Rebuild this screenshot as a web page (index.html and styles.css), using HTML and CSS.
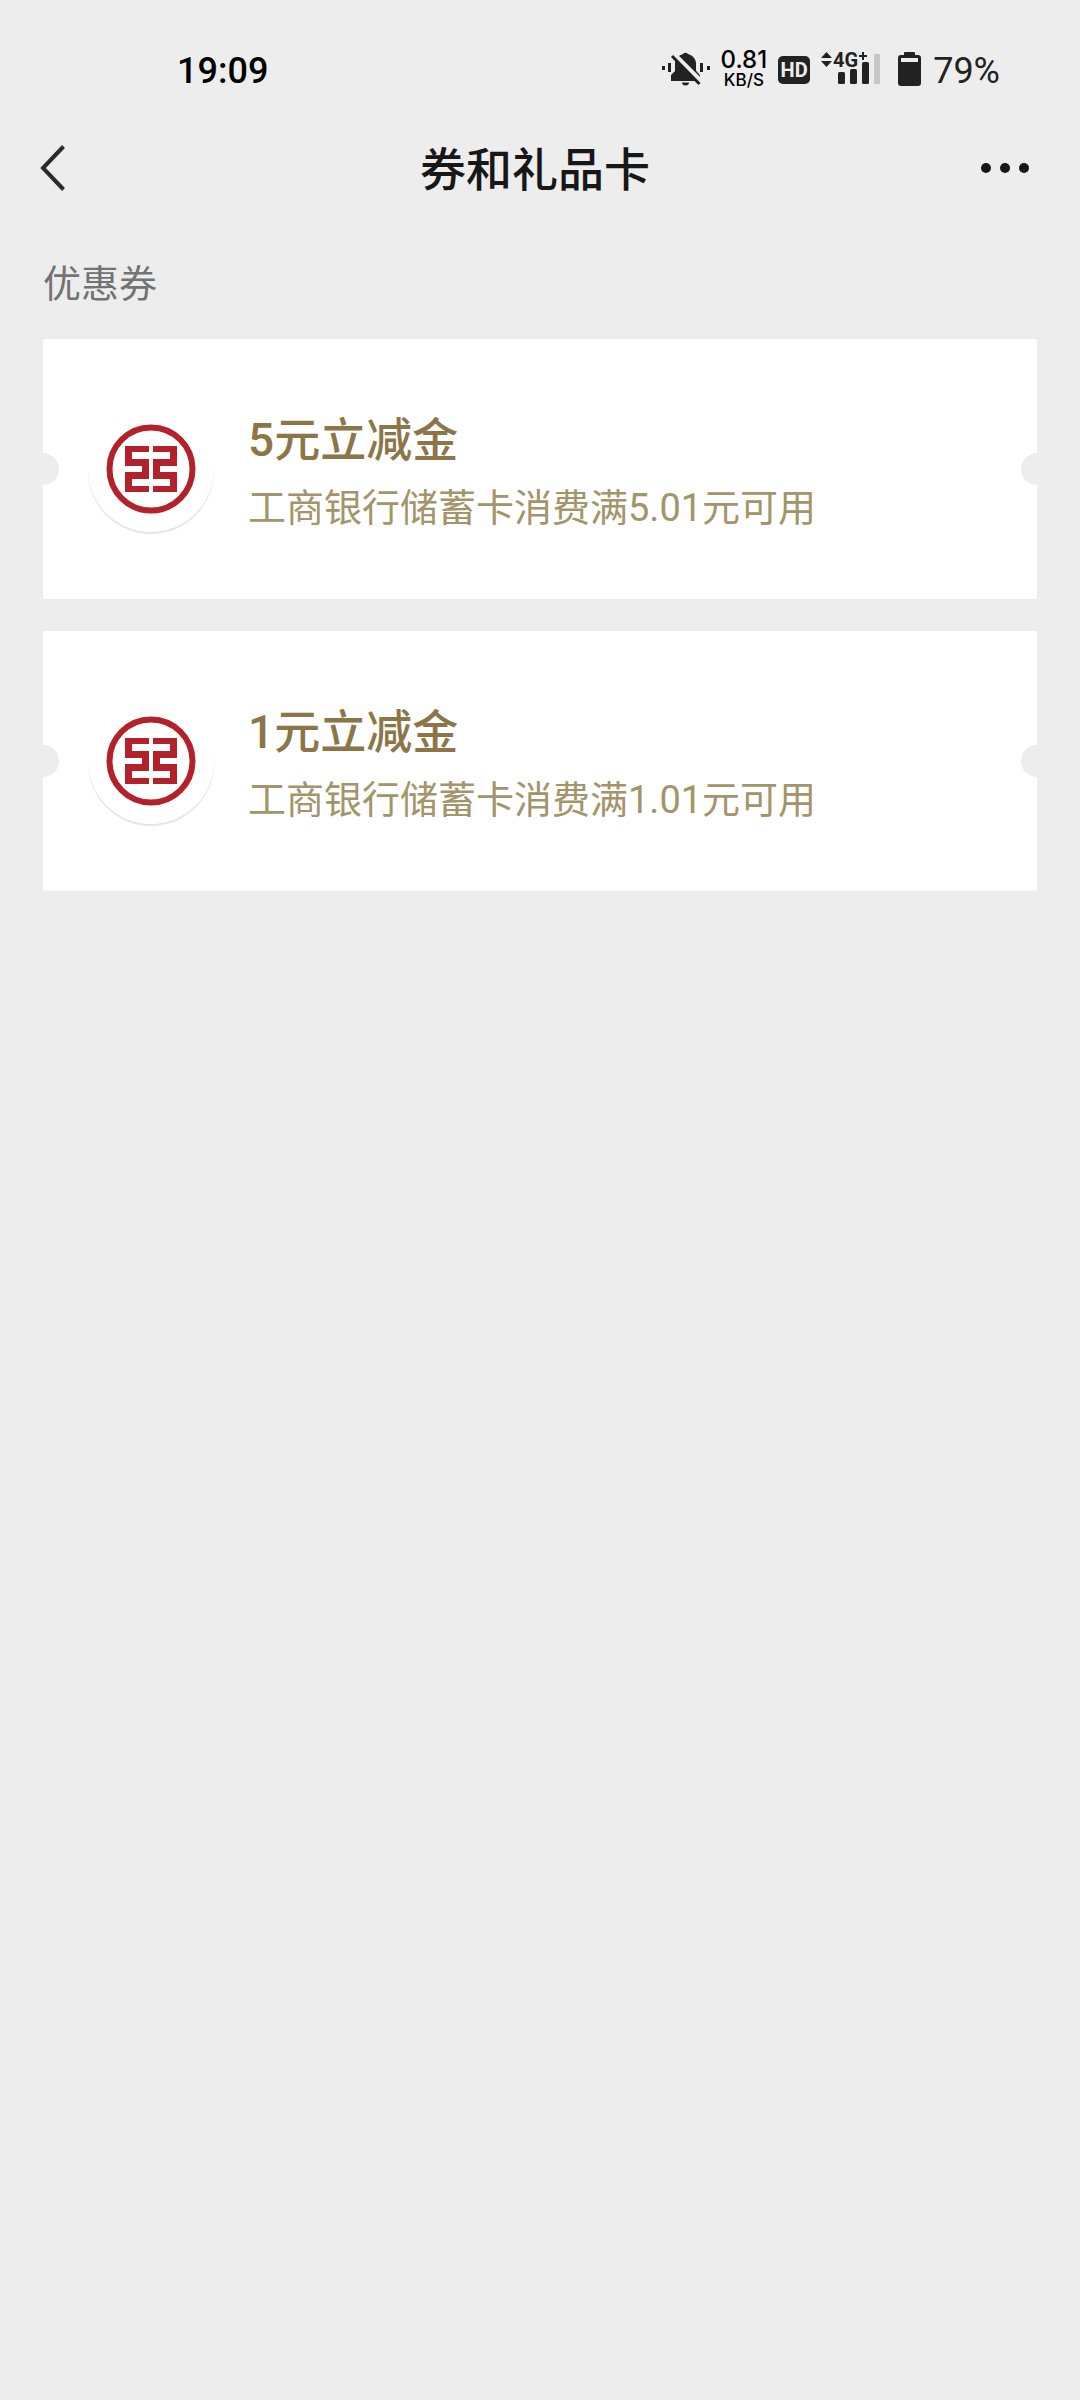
FILE: index.html
```
<!DOCTYPE html>
<html lang="zh-CN">
<head>
    <meta charset="UTF-8">
    <meta name="viewport" content="width=device-width, initial-scale=1.0">
    <title>券和礼品卡</title>
    <link rel="stylesheet" href="styles.css">
</head>
<body>

    <div class="status-bar">
        <span class="time">19:09</span>
        <div class="status-icons">
            <svg class="icon" width="48" height="36" viewBox="1 0 48 36" aria-hidden="true">
                <g fill="#222">
                    <path d="M22 2a3 3 0 0 1 5 0c5 1.500 8 5 8 9.500v7l4 5v5.500H10v-6l4-4v-7.500c0-4.500 3-8 8-9.500z"/>
                    <path d="M21 30.500h7a3.500 3 0 0 1-7 0z"/>
                    <rect x="1" y="14" width="3" height="4"/>
                    <rect x="7" y="11" width="3" height="9"/>
                    <rect x="39" y="11" width="3" height="9"/>
                    <rect x="46" y="14" width="3" height="4"/>
                </g>
                <path d="M12.500 2.500L40 30" stroke="#ededed" stroke-width="6"/>
                <path d="M11 4L38.500 32" stroke="#222" stroke-width="3"/>
            </svg>
            <div class="speed">
                <span class="speed-value">0.81</span>
                <span class="speed-unit">KB/S</span>
            </div>
            <span class="hd">HD</span>
            <svg class="icon" width="60" height="48" viewBox="0 -6 60 48" aria-hidden="true">
                <g fill="#222">
                    <path d="M0 6l5.500-6L11 6zM0 9h11l-5.500 6z"/>
                    <rect x="17" y="20" width="7" height="12" rx="1.500"/>
                    <rect x="29" y="17" width="7" height="15" rx="1.500"/>
                    <rect x="41" y="10" width="7" height="22" rx="1.500"/>
                </g>
                <rect x="53" y="2" width="6" height="30" rx="1" fill="#c6c6c6"/>
                <text class="network" x="12" y="15">4G</text>
                <path d="M42 0v8M38 4h8" stroke="#222" stroke-width="2"/>
            </svg>
            <svg class="icon battery" width="24" height="36" viewBox="0 0 24 36" aria-hidden="true">
                <path fill="#222" fill-rule="evenodd" d="M7 0h9a1 1 0 0 1 1 1v2h3a3 3 0 0 1 3 3v25a3 3 0 0 1-3 3H3a3 3 0 0 1-3-3V6a3 3 0 0 1 3-3h3V1a1 1 0 0 1 1-1zM3 6v4h17V6z"/>
            </svg>
            <span class="level">79%</span>
        </div>
    </div>

    <header class="nav-bar">
        <button class="nav-button" type="button" aria-label="返回">
            <svg width="26" height="48" viewBox="0 0 26 48">
                <path d="M23.500 2.500L3 24l20.500 21.500" fill="none" stroke="#2b2b2b" stroke-width="4"/>
            </svg>
        </button>
        <h1 class="nav-title">券和礼品卡</h1>
        <button class="nav-button" type="button" aria-label="更多">
            <svg width="50" height="12" viewBox="0 0 50 12" fill="#171717">
                <circle cx="6" cy="6" r="5"/>
                <circle cx="25" cy="6" r="5"/>
                <circle cx="44" cy="6" r="5"/>
            </svg>
        </button>
    </header>

    <main class="content">
        <h2 class="section-title">优惠券</h2>
        <ul class="coupons">
            <li>
                <a class="coupon" href="#">
                    <span class="logo">
                        <svg width="90" height="90" viewBox="0 0 90 90" aria-hidden="true">
                            <circle cx="45" cy="45" r="41.500" fill="none" stroke="#b3222a" stroke-width="6"/>
                            <path fill="#b3222a" d="M19 22h24v6H26v7h17v20H26v7h17v6H19V48h17v-6H19zM71 22H47v6h17v7H47v20h17v7H47v6h24V48H54v-6h17z"/>
                        </svg>
                    </span>
                    <span class="info">
                        <span class="coupon-title">5元立减金</span>
                        <span class="coupon-desc">工商银行储蓄卡消费满5.01元可用</span>
                    </span>
                </a>
            </li>
            <li>
                <a class="coupon" href="#">
                    <span class="logo">
                        <svg width="90" height="90" viewBox="0 0 90 90" aria-hidden="true">
                            <circle cx="45" cy="45" r="41.500" fill="none" stroke="#b3222a" stroke-width="6"/>
                            <path fill="#b3222a" d="M19 22h24v6H26v7h17v20H26v7h17v6H19V48h17v-6H19zM71 22H47v6h17v7H47v20h17v7H47v6h24V48H54v-6h17z"/>
                        </svg>
                    </span>
                    <span class="info">
                        <span class="coupon-title">1元立减金</span>
                        <span class="coupon-desc">工商银行储蓄卡消费满1.01元可用</span>
                    </span>
                </a>
            </li>
        </ul>
    </main>

</body>
</html>
```
FILE: styles.css
```
* {
    box-sizing: border-box;
}

body {
    margin: 0;
    min-height: 100vh;
    background-color: #ededed;
    font-family: Roboto, "Noto Sans CJK SC", sans-serif;
    color: #171717;
}

.status-bar {
    display: flex;
    justify-content: space-between;
    align-items: center;
    height: 120px;
    padding: 20px 80px 0 177px;
    font-size: 36px;
}

.time,
.level {
    padding-top: 2px;
}

.time {
    font-weight: 500;
    color: #000;
}

.level {
    color: #222;
}

.status-icons {
    display: flex;
    align-items: center;
    gap: 11px;
}

.icon {
    display: block;
}

.speed {
    display: flex;
    flex-direction: column;
    align-items: center;
    font-family: Inter, sans-serif;
    font-weight: 500;
    color: #000;
}

.speed-value {
    font-size: 24px;
    line-height: 20px;
}

.speed-unit {
    font-size: 17px;
    line-height: 20px;
}

.hd {
    width: 32px;
    border-radius: 5px;
    background-color: #222;
    color: #ededed;
    font-size: 20px;
    font-weight: 700;
    line-height: 28px;
    text-align: center;
}

.network {
    font-size: 20px;
    font-weight: 700;
    fill: #222;
}

.battery {
    margin-left: 6px;
}

.nav-bar {
    display: flex;
    justify-content: space-between;
    align-items: center;
    height: 96px;
    padding: 0 50px 0 40px;
}

.nav-button {
    display: flex;
    width: 50px;
    padding: 0;
    border: none;
    background: none;
    cursor: pointer;
}

.nav-title {
    margin: 0;
    padding-top: 4px;
    font-size: 46px;
    font-weight: 500;
    line-height: 64px;
}

.content {
    padding: 0 43px;
}

.section-title {
    margin: 0;
    padding: 38px 0 25px;
    font-size: 38px;
    font-weight: 400;
    line-height: 60px;
    color: #737373;
}

.coupons {
    display: flex;
    flex-direction: column;
    gap: 32px;
    margin: 0;
    padding: 0;
    list-style: none;
}

.coupon {
    position: relative;
    display: flex;
    align-items: center;
    gap: 34px;
    padding: 61px 45px;
    border-radius: 2px;
    background-color: #fff;
    color: #8c7648;
    text-decoration: none;
}

/* ticket notches */
.coupon::before,
.coupon::after {
    content: "";
    position: absolute;
    top: 114px;
    width: 32px;
    height: 32px;
    border-radius: 50%;
    background-color: #ededed;
}

.coupon::before {
    left: -16px;
}

.coupon::after {
    right: -16px;
}

.logo {
    display: flex;
    flex-shrink: 0;
    justify-content: center;
    align-items: center;
    width: 126px;
    height: 126px;
    border-radius: 50%;
    box-shadow: 0 2px 1px #e4e4e4;
    background-color: #fff;
}

.info {
    display: flex;
    flex-direction: column;
    padding-top: 2px;
}

.coupon-title {
    font-size: 46px;
    font-weight: 500;
    line-height: 76px;
}

.coupon-desc {
    font-size: 38px;
    line-height: 60px;
    color: #a39469;
}
```
